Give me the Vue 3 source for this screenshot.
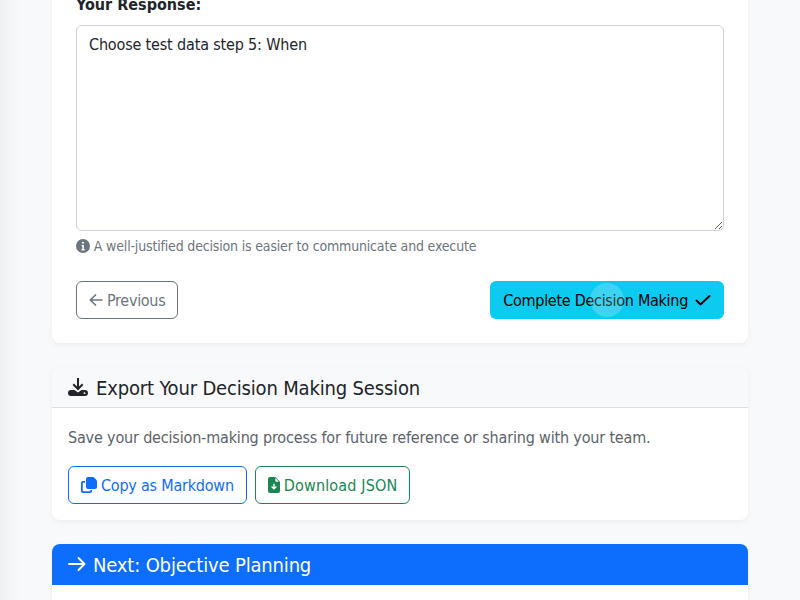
<script setup>
const title = 'Export Your Decision Making Session'
</script>

<template>
  <div class="page">
    <div class="content">
      <section class="card step">
        <label class="label" for="resp">Your Response:</label>
        <textarea id="resp" class="area" rows="8">Choose test data step 5: When</textarea>
        <div class="help">
          <svg class="ic-info" viewBox="0 0 16 16"><path fill="currentColor" fill-rule="evenodd" d="M8 16A8 8 0 1 0 8 0a8 8 0 0 0 0 16zM8 3a1.200 1.200 0 1 1 0 2.400A1.200 1.200 0 0 1 8 3zM6.400 6.800h2.600v4.700h1v1.500H6.200v-1.500h1V8.300h-.8V6.800z"/></svg>
          A well-justified decision is easier to communicate and execute
        </div>
        <div class="actions">
          <button class="btn prev">
            <svg class="ic-arrow" viewBox="0 0 14 14"><path fill="none" stroke="currentColor" stroke-width="1.700" stroke-linecap="round" stroke-linejoin="round" d="M13 7H1.500M6.500 2 1.300 7l5.200 5"/></svg>
            <span>Previous</span>
          </button>
          <button class="btn done">
            <span>Complete Decision Making</span>
            <svg class="ic" viewBox="0 0 16 16"><path fill="none" stroke="currentColor" stroke-width="1.900" stroke-linecap="round" stroke-linejoin="round" d="M1.500 8.500 5.500 12.500 14.500 4"/></svg>
            <span class="ripple"></span>
          </button>
        </div>
      </section>

      <section class="card export">
        <header class="head">
          <svg class="ic-dl" viewBox="0 0 20 20"><path fill="currentColor" d="M9 1h2v8.600l3-3 1.400 1.400L10 13.400 4.600 8 6 6.600l3 3V1z"/><path fill="currentColor" fill-rule="evenodd" d="M3 13h3.500L10 15.500 13.500 13H17a3 3 0 0 1 0 6H3a3 3 0 0 1 0-6zm13.500 2.300a.9.9 0 1 0 0 1.800.9.9 0 0 0 0-1.800z"/></svg>
          <h5>{{ title }}</h5>
        </header>
        <div class="body">
          <p>Save your decision-making process for future reference or sharing with your team.</p>
          <div class="row">
            <button class="btn blue">
              <svg class="ic" viewBox="0 0 16 16"><path fill="currentColor" d="M7 0h5.500L16 3.500V10a2 2 0 0 1-2 2H7a2 2 0 0 1-2-2V2a2 2 0 0 1 2-2z"/><path fill="currentColor" d="M1.800 4H4v1.700H1.800v8.600h7.400V13H11v1.200A1.800 1.800 0 0 1 9.200 16H1.800A1.800 1.800 0 0 1 0 14.200V5.800A1.800 1.800 0 0 1 1.800 4z"/></svg>
              <span>Copy as Markdown</span>
            </button>
            <button class="btn green">
              <svg class="ic-file" viewBox="2 0 12 16"><path fill="currentColor" fill-rule="evenodd" d="M4 0h5.300L14 4.700V14a2 2 0 0 1-2 2H4a2 2 0 0 1-2-2V2a2 2 0 0 1 2-2zm5.300 1v2.700a1 1 0 0 0 1 1H13L9.300 1zM7.300 6.800v3.500L6 9l-.9.900L8 12.800l2.900-2.900L10 9l-1.300 1.300V6.800H7.300z"/></svg>
              <span>Download JSON</span>
            </button>
          </div>
        </div>
      </section>

      <section class="card next">
        <header class="next-head">
          <svg class="ic-next" viewBox="0 0 18 18"><path fill="none" stroke="currentColor" stroke-width="1.900" stroke-linecap="round" stroke-linejoin="round" d="M1 9h15.500M10.500 3l6 6-6 6"/></svg>
          <h5>Next: Objective Planning</h5>
        </header>
        <div class="next-body"></div>
      </section>
    </div>
  </div>
</template>

<style>
html, body { margin: 0; background: #f8f9fa; }
</style>

<style scoped>
.page {
  height: 600px;
  overflow: hidden;
  background: linear-gradient(90deg, #eff0f2 0, #f4f5f6 10px, #f8f9fa 20px);
  font-family: "DejaVu Sans Condensed", "DejaVu Sans", sans-serif;
  font-stretch: condensed;
  font-size: 16px;
  line-height: 1.5;
  letter-spacing: -0.16px;
  color: #212529;
}
.content {
  margin: -31px 52px 0;
  display: flex;
  flex-direction: column;
  gap: 24px;
}
.card {
  background: #fff;
  border-radius: 8px;
  box-shadow: 0 2px 6px rgba(0, 0, 0, .05);
  overflow: hidden;
}
.step { padding: 24px; }
.label { display: block; font-weight: 700; margin-bottom: 8px; letter-spacing: 0; }
.area {
  display: block;
  box-sizing: border-box;
  width: 100%;
  height: 206px;
  padding: 7px 12px 5px;
  border: 1px solid #ced4da;
  border-radius: 6px;
  font: inherit;
  letter-spacing: inherit;
  color: inherit;
  outline: none;
}
.help {
  margin-top: 5px;
  height: 20px;
  font-size: 14px;
  line-height: 21px;
  letter-spacing: -0.17px;
  color: #6c757d;
}
.ic-info { width: 14px; height: 14px; vertical-align: -2px; }
.actions { margin-top: 25px; display: flex; justify-content: space-between; }
.btn {
  position: relative;
  overflow: hidden;
  box-sizing: border-box;
  display: inline-flex;
  align-items: center;
  gap: 4px;
  height: 38px;
  padding: 7px 12px 5px;
  border: 1px solid transparent;
  border-radius: 6px;
  background: transparent;
  font: inherit;
  letter-spacing: inherit;
  white-space: nowrap;
}
.ic { width: 16px; height: 16px; flex: none; margin-top: -2px; }
.ic-arrow { width: 14px; height: 14px; flex: none; margin-top: -2px; }
.ic-file { width: 12px; height: 16px; flex: none; margin-top: -2px; }
.prev { border-color: #6c757d; color: #6c757d; letter-spacing: -0.3px; }
.done { background: #0dcaf0; color: #000; gap: 7px; letter-spacing: -0.29px; }
.ripple {
  position: absolute;
  left: 99px;
  top: 1px;
  width: 34px;
  height: 34px;
  border-radius: 50%;
  background: rgba(255, 255, 255, .2);
}
.head {
  display: flex;
  align-items: center;
  gap: 8px;
  padding: 9px 16px 7px;
  background: #f8f9fa;
  border-bottom: 1px solid #dcdee0;
}
h5 { margin: 0; font-size: 20px; font-weight: 400; line-height: 1.2; letter-spacing: -0.17px; }
.ic-dl { width: 20px; height: 20px; margin-top: -2px; }
.body { padding: 18px 16px 16px; }
.body p { margin: 0 0 16px; color: #5c636a; letter-spacing: -0.17px; }
.row { display: flex; gap: 8px; }
.blue { border-color: #0d6efd; color: #0d6efd; letter-spacing: -0.22px; }
.green { border-color: #198754; color: #198754; letter-spacing: .15px; }
.next-head {
  display: flex;
  align-items: center;
  gap: 7px;
  padding: 9px 16px 8px;
  background: #0d6efd;
  color: #fff;
}
.ic-next { width: 18px; height: 18px; margin-top: -2px; }
.next-body { height: 60px; }
</style>
